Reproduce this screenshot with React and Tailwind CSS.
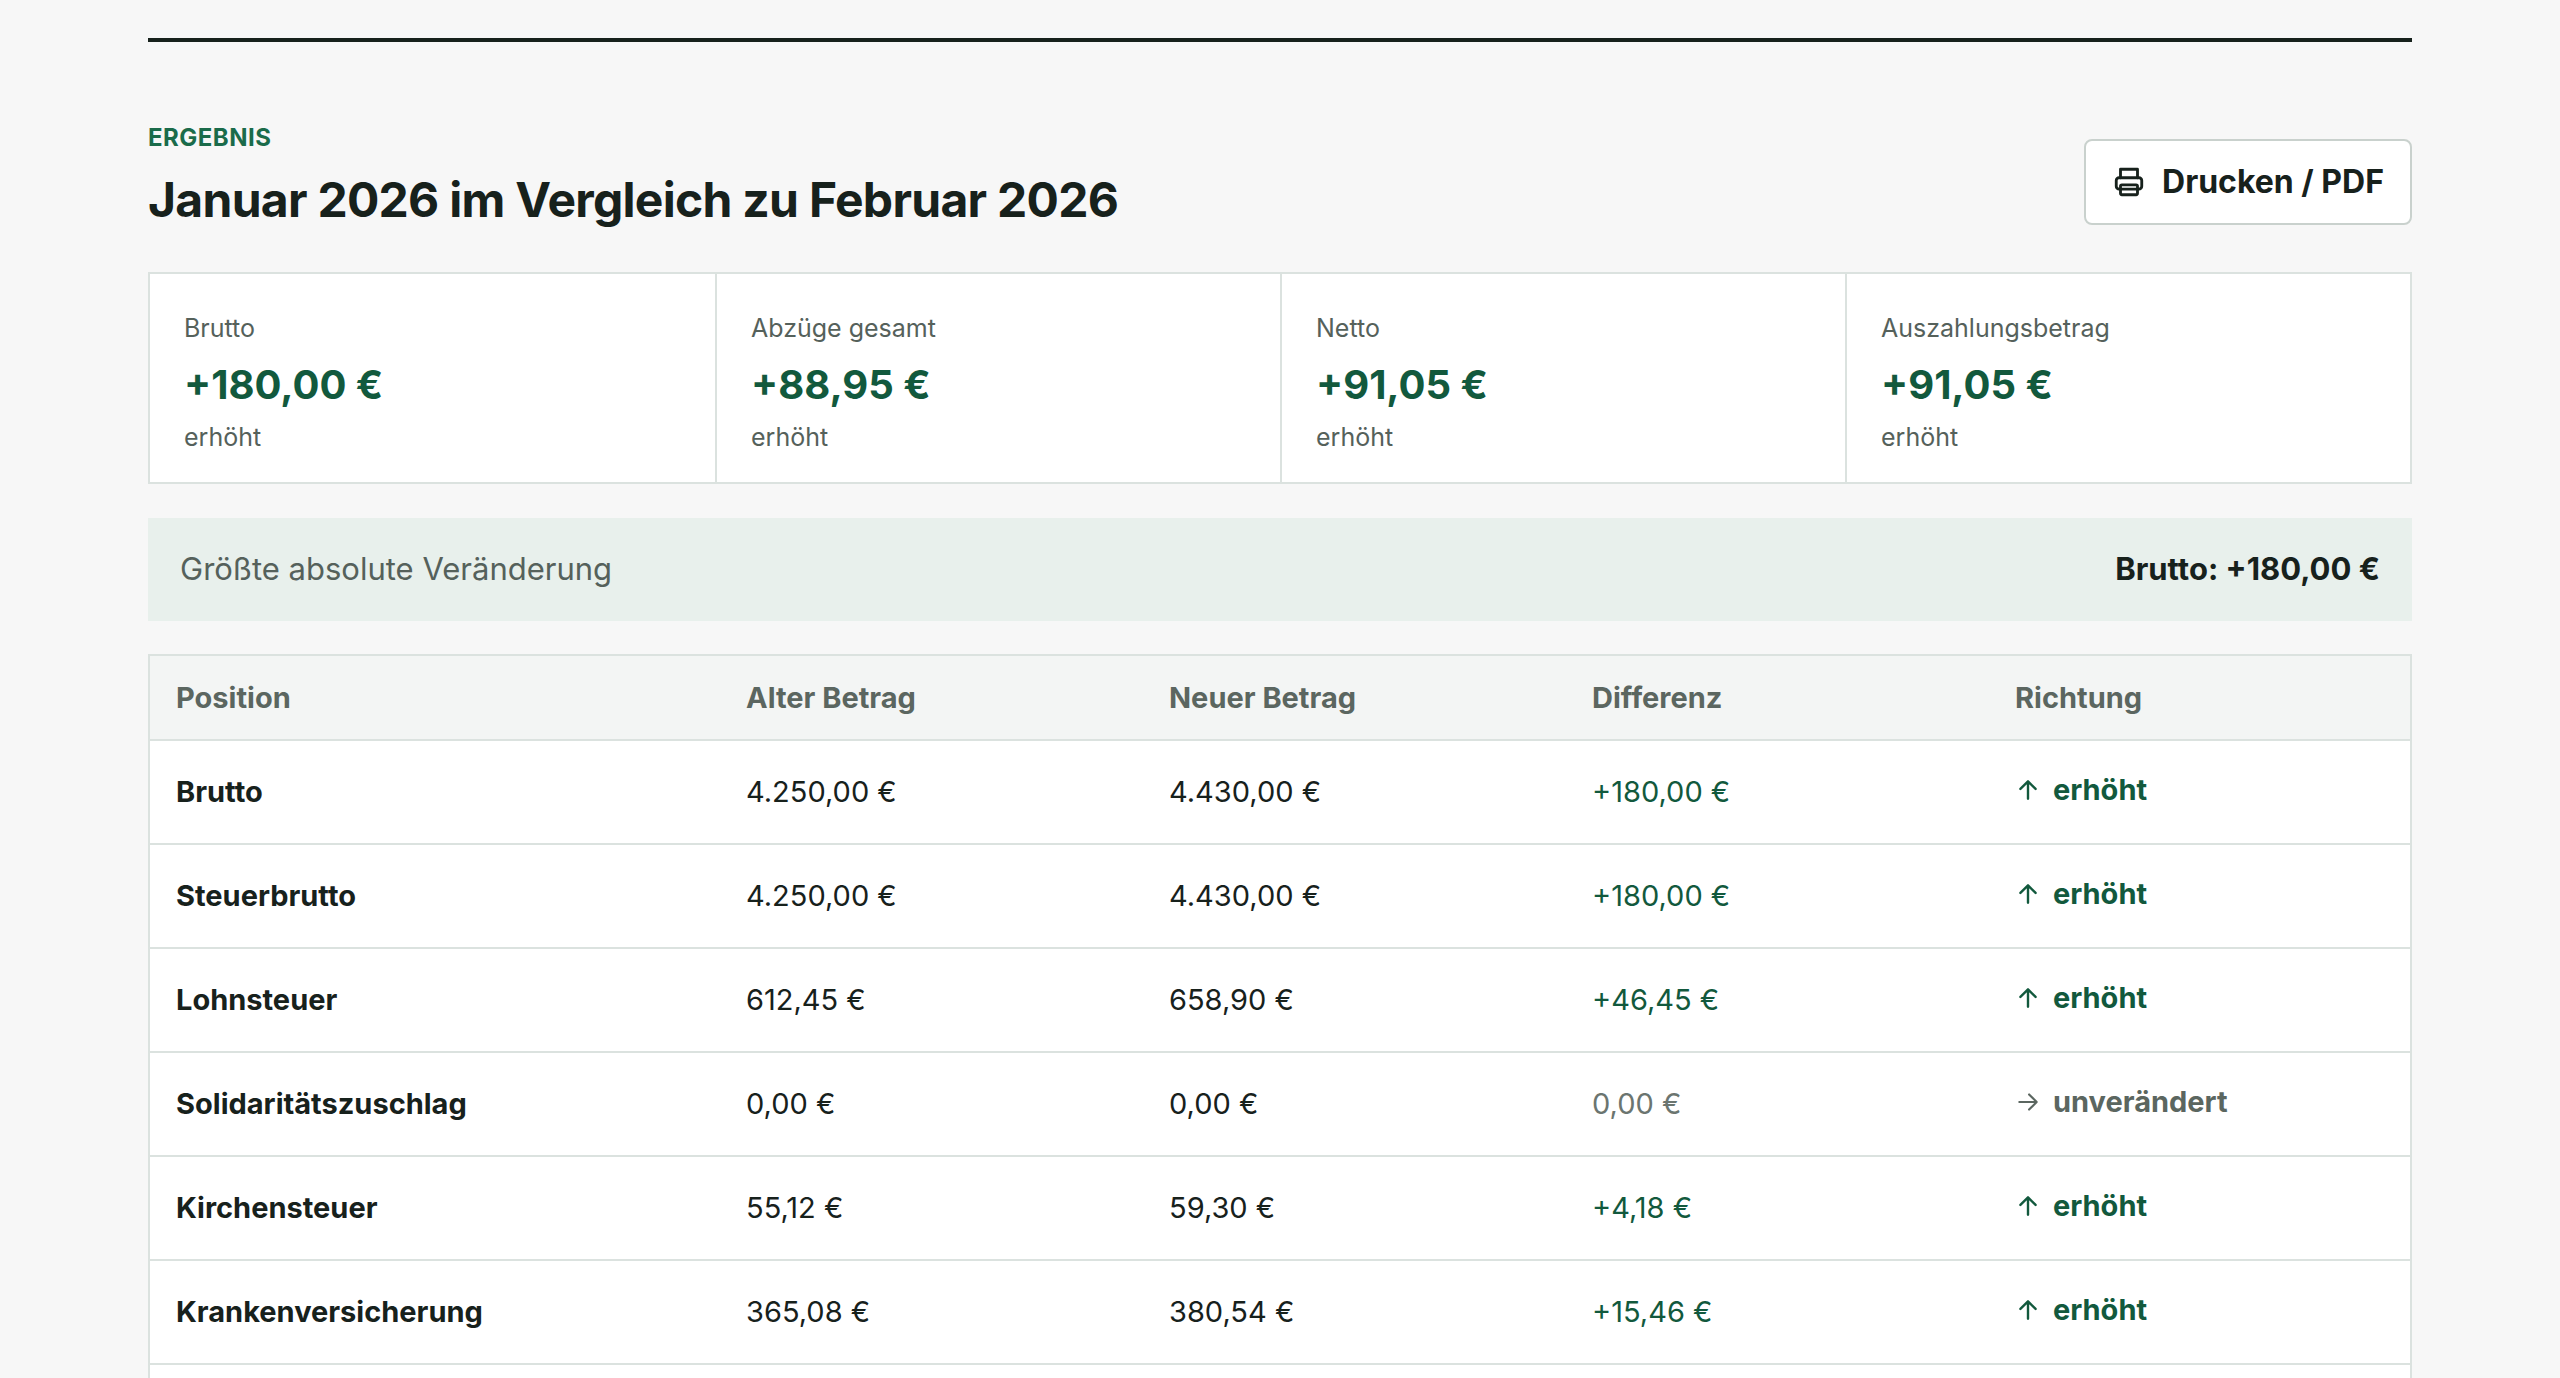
import React from "react";

const cards = [
  ["Brutto", "+180,00 €"],
  ["Abzüge gesamt", "+88,95 €"],
  ["Netto", "+91,05 €"],
  ["Auszahlungsbetrag", "+91,05 €"],
];

const rows = [
  ["Brutto", "4.250,00 €", "4.430,00 €", "+180,00 €", true],
  ["Steuerbrutto", "4.250,00 €", "4.430,00 €", "+180,00 €", true],
  ["Lohnsteuer", "612,45 €", "658,90 €", "+46,45 €", true],
  ["Solidaritätszuschlag", "0,00 €", "0,00 €", "0,00 €", false],
  ["Kirchensteuer", "55,12 €", "59,30 €", "+4,18 €", true],
  ["Krankenversicherung", "365,08 €", "380,54 €", "+15,46 €", true],
];

function Up() {
  return (
    <svg width="26" height="26" viewBox="0 0 24 24" fill="none" stroke="currentColor" strokeWidth="2.2" strokeLinecap="round" strokeLinejoin="round">
      <path d="M12 20V4M5 11l7-7 7 7" />
    </svg>
  );
}
function Right() {
  return (
    <svg width="26" height="26" viewBox="0 0 24 24" fill="none" stroke="currentColor" strokeWidth="2" strokeLinecap="round" strokeLinejoin="round">
      <path d="M4 12h16M13 5l7 7-7 7" />
    </svg>
  );
}

export default function App() {
  return (
    <div className="h-[1378px] overflow-hidden bg-[#f7f7f7] text-[#17211c]" style={{ fontFamily: "Inter, 'Liberation Sans', sans-serif" }}>
      <div className="mx-[148px] pt-[38px]">
        <div className="h-[4px] bg-[#17211c]" />
        <div className="mt-[84px] flex items-end justify-between">
          <div>
            <div className="text-[24px] font-bold tracking-[0.02em] text-[#1a6b4a] leading-none">ERGEBNIS</div>
            <h1 className="mt-[26px] text-[48px] font-bold leading-none tracking-[-0.015em]">Januar 2026 im Vergleich zu Februar 2026</h1>
          </div>
          <button className="mb-[-1px] flex h-[86px] w-[328px] items-center justify-center gap-[16px] rounded-[8px] border-2 border-[#c9d1cd] bg-white text-[32px] font-bold">
            <svg width="34" height="34" viewBox="0 0 24 24" fill="none" stroke="currentColor" strokeWidth="2" strokeLinecap="round" strokeLinejoin="round">
              <path d="M6 9V3h12v6" />
              <rect x="3" y="9" width="18" height="8" rx="2" />
              <rect x="6" y="14" width="12" height="7" rx="1" />
            </svg>
            Drucken / PDF
          </button>
        </div>
        <div className="mt-[48px] grid grid-cols-4 border-2 border-[#dbe2df] bg-white">
          {cards.map(([l, v], i) => (
            <div key={l} className={`h-[208px] px-[34px] pt-[42px] ${i > 0 ? "border-l-2 border-[#dbe2df]" : ""}`}>
              <div className="text-[25px] text-[#55615b] leading-none">{l}</div>
              <div className="mt-[24px] text-[40px] font-bold text-[#12593d] leading-none">{v}</div>
              <div className="mt-[20px] text-[25px] text-[#55615b] leading-none">erhöht</div>
            </div>
          ))}
        </div>
        <div className="mt-[34px] flex h-[103px] items-center justify-between bg-[#e8f0ec] px-[32px]">
          <span className="text-[31px] text-[#55615b]">Größte absolute Veränderung</span>
          <span className="text-[31px] font-bold">Brutto: +180,00 €</span>
        </div>
        <div className="mt-[33px] h-[800px] border-2 border-[#dbe2df] bg-white">
          <div className="flex h-[85px] items-center border-b-2 border-[#dbe2df] bg-[#f3f5f4] text-[29px] font-bold text-[#5b6660]">
            <div className="w-[596px] pl-[26px]">Position</div>
            <div className="w-[423px]">Alter Betrag</div>
            <div className="w-[423px]">Neuer Betrag</div>
            <div className="w-[423px]">Differenz</div>
            <div className="flex-1">Richtung</div>
          </div>
          {rows.map(([n, a, b, d, up]) => (
            <div key={n} className="flex h-[104px] items-center border-b-2 border-[#dbe2df] text-[29px]">
              <div className="w-[596px] pl-[26px] font-bold">{n}</div>
              <div className="w-[423px]">{a}</div>
              <div className="w-[423px]">{b}</div>
              <div className={`w-[423px] ${up ? "text-[#12593d]" : "text-[#6b7570]"}`}>{d}</div>
              <div className={`flex flex-1 items-center gap-[12px] pb-[4px] font-bold ${up ? "text-[#12593d]" : "text-[#5b6660]"}`}>
                {up ? <Up /> : <Right />}
                {up ? "erhöht" : "unverändert"}
              </div>
            </div>
          ))}
        </div>
      </div>
    </div>
  );
}
